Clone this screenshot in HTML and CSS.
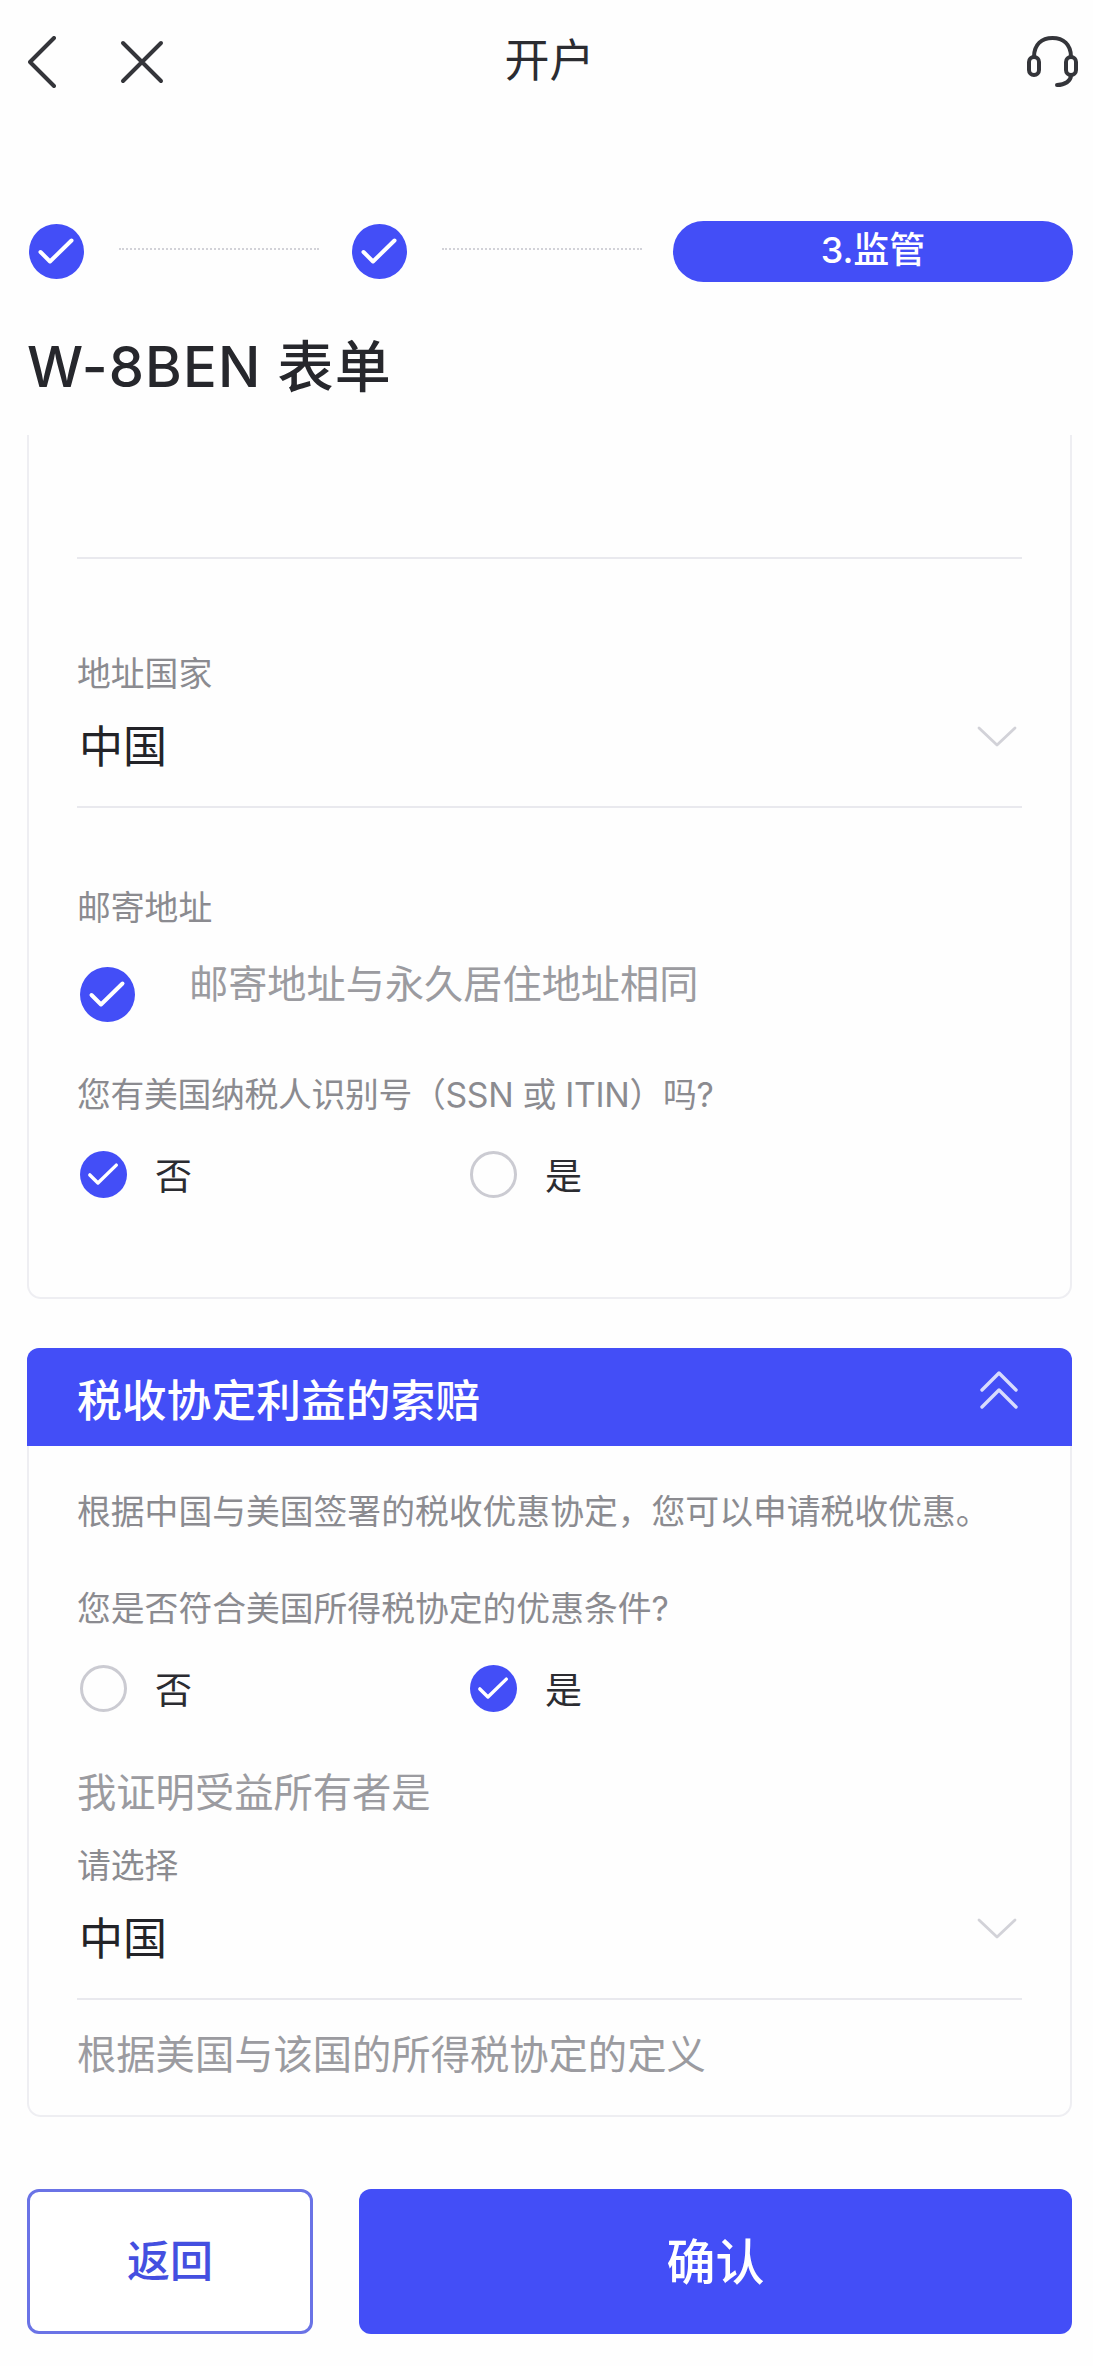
FILE: index.html
```html
<!DOCTYPE html>
<html lang="zh-CN">
<head>
  <meta charset="UTF-8">
  <meta name="viewport" content="width=device-width, initial-scale=1.0">
  <title>开户</title>
  <link rel="stylesheet" href="styles.css">
</head>
<body>
  <svg class="defs" aria-hidden="true">
    <symbol id="tick" viewBox="0 0 55 55">
      <circle cx="27.5" cy="27.5" r="27.5" fill="#434ef7" />
      <path d="M11.500 28 L21 37.500 L42.500 16.500" fill="none" stroke="#fff" stroke-width="4" stroke-linecap="round" stroke-linejoin="round" />
    </symbol>
    <symbol id="chevron" viewBox="0 0 40 21">
      <path d="M2 2 L20 19 L38 2" fill="none" stroke="#d2d2d8" stroke-width="2.8" stroke-linecap="round" stroke-linejoin="round" />
    </symbol>
  </svg>

  <div class="topbar">
    <div class="topbar-left">
      <svg class="icon-back" viewBox="0 0 28 52"><path d="M26 2 L2 26 L26 50" /></svg>
      <svg class="icon-close" viewBox="0 0 44 44"><path d="M3 3 L41 41 M41 3 L3 41" /></svg>
    </div>
    <div class="topbar-title">开户</div>
    <div class="topbar-right">
      <svg class="icon-headset" viewBox="0 0 52 52">
        <rect x="3" y="21" width="10" height="18" rx="5" />
        <rect x="40" y="21" width="10" height="18" rx="5" />
        <path d="M8 21 C8 8 16 2 26.500 2 C37 2 45 8 45 21 M45 39 C45 45 39 49 31 49" />
      </svg>
    </div>
  </div>

  <div class="steps">
    <svg class="step-done"><use href="#tick" /></svg>
    <div class="step-line"></div>
    <svg class="step-done"><use href="#tick" /></svg>
    <div class="step-line"></div>
    <div class="step-current">3.监管</div>
  </div>

  <h1 class="page-title">W-8BEN 表单</h1>

  <div class="card-body card-first">
    <div class="empty-field"></div>

    <div class="field field-country">
      <div class="label">地址国家</div>
      <div class="select-row">
        <span class="select-value">中国</span>
        <svg class="select-arrow"><use href="#chevron" /></svg>
      </div>
    </div>

    <div class="label mail-label">邮寄地址</div>
    <div class="same-address">
      <svg class="same-tick"><use href="#tick" /></svg>
      <span class="same-text">邮寄地址与永久居住地址相同</span>
    </div>

    <div class="label question">您有美国纳税人识别号（SSN 或 ITIN）吗?</div>
    <div class="radios radios-tight">
      <div class="radio">
        <svg class="radio-on"><use href="#tick" /></svg>
        <span>否</span>
      </div>
      <div class="radio">
        <i class="radio-off"></i>
        <span>是</span>
      </div>
    </div>
  </div>

  <div class="card-head">
    <span>税收协定利益的索赔</span>
    <svg class="icon-collapse" viewBox="0 0 38 38">
      <path d="M2 19 L19 2 L36 19 M2 36 L19 19 L36 36" />
    </svg>
  </div>
  <div class="card-body card-second">
    <div class="label intro">根据中国与美国签署的税收优惠协定，您可以申请税收优惠。</div>
    <div class="label question-two">您是否符合美国所得税协定的优惠条件?</div>
    <div class="radios radios-tight">
      <div class="radio">
        <i class="radio-off"></i>
        <span>否</span>
      </div>
      <div class="radio">
        <svg class="radio-on"><use href="#tick" /></svg>
        <span>是</span>
      </div>
    </div>
    <div class="hint owner">我证明受益所有者是</div>
    <div class="field field-owner">
      <div class="label">请选择</div>
      <div class="select-row">
        <span class="select-value">中国</span>
        <svg class="select-arrow"><use href="#chevron" /></svg>
      </div>
    </div>
    <div class="hint definition">根据美国与该国的所得税协定的定义</div>
  </div>

  <div class="actions">
    <button class="btn-back">返回</button>
    <button class="btn-confirm">确认</button>
  </div>
</body>
</html>
```

FILE: styles.css
```css
* {
  box-sizing: border-box;
}
body {
  margin: 0;
  width: 1093px;
  height: 2366px;
  overflow: hidden;
  background: #fefefe;
  color: #222328;
  font-family: Inter, "Noto Sans CJK SC", sans-serif;
}
.defs {
  display: none;
}

/* top bar */
.topbar {
  height: 124px;
  padding: 0 15px;
  display: grid;
  grid-template-columns: 1fr auto 1fr;
  align-items: center;
}
.topbar svg {
  display: block;
  fill: none;
  stroke: #34353a;
  stroke-width: 4;
  stroke-linecap: round;
  stroke-linejoin: round;
}
.topbar-left {
  padding-left: 13px;
  display: flex;
  align-items: center;
  gap: 64px;
}
.icon-back {
  width: 28px;
  height: 52px;
}
.icon-close {
  width: 44px;
  height: 44px;
}
.topbar-title {
  margin: 0 0 3px 6px;
  font-size: 45px;
  line-height: 60px;
  color: #2b2c31;
}
.topbar-right {
  display: flex;
  justify-content: flex-end;
}
.icon-headset {
  width: 52px;
  height: 52px;
}

/* steps */
.steps {
  margin-top: 97px;
  height: 61px;
  padding: 0 20px 0 29px;
  display: flex;
  align-items: center;
}
.step-done {
  width: 55px;
  height: 55px;
  flex: none;
}
.step-line {
  width: 200px;
  margin: 0 33px 6px 35px;
  border-top: 2px dotted #d2d2d8;
}
.step-current {
  flex: 1;
  margin-left: -2px;
  height: 61px;
  border-radius: 31px;
  background: #434ef7;
  color: #fff;
  font-size: 36px;
  font-weight: 500;
  line-height: 58px;
  text-align: center;
}

/* heading */
.page-title {
  margin: 47px 0 0 27px;
  font-size: 56px;
  letter-spacing: 1.15px;
  line-height: 76px;
  font-weight: 500;
  color: #26272c;
}

/* cards */
.card-body {
  width: 1045px;
  margin-left: 27px;
  padding: 0 48px;
  border: 2px solid #eeeef2;
  border-top: none;
  border-radius: 0 0 14px 14px;
}
.card-first {
  margin-top: 30px;
  padding-bottom: 93px;
}
.empty-field {
  height: 124px;
  border-bottom: 2px solid #e9e9ee;
}
.label {
  font-size: 33.8px;
  line-height: 40px;
  color: #8b8b90;
}
.field-country {
  margin-top: 95px;
}
.select-row {
  padding: 23px 0 29px 2px;
  display: flex;
  justify-content: space-between;
  align-items: flex-start;
  border-bottom: 2px solid #e9e9ee;
}
.select-value {
  font-size: 44px;
  line-height: 60px;
  color: #222328;
}
.select-arrow {
  width: 40px;
  height: 21px;
  margin: 9px 5px 0 0;
}
.mail-label {
  margin-top: 80px;
}
.same-address {
  margin-top: 31px;
  padding-left: 3px;
  display: flex;
  align-items: flex-start;
}
.same-tick {
  width: 55px;
  height: 55px;
  margin-top: 8px;
  flex: none;
}
.same-text {
  margin-left: 54px;
  font-size: 39.2px;
  line-height: 50px;
  color: #9b9ba0;
}
.question {
  margin-top: 53px;
  letter-spacing: -0.3px;
}
.radios {
  margin-top: 30px;
  padding-left: 3px;
  height: 60px;
  display: grid;
  grid-template-columns: 390px 1fr;
}
.radios-tight {
  margin-top: 29px;
}
.radio {
  display: flex;
  align-items: center;
  gap: 28px;
  font-size: 37px;
  color: #2b2c31;
}
.radio-on,
.radio-off {
  display: block;
  width: 47px;
  height: 47px;
  flex: none;
}
.radio-off {
  border: 3px solid #cbcbd2;
  border-radius: 50%;
}
.card-head {
  width: 1045px;
  height: 98px;
  margin: 49px 0 0 27px;
  padding: 0 54px 0 50px;
  display: flex;
  justify-content: space-between;
  align-items: center;
  background: #434ef7;
  border-radius: 12px 12px 0 0;
  color: #fff;
  font-size: 44.8px;
  font-weight: 500;
}
.icon-collapse {
  width: 38px;
  height: 38px;
  margin-bottom: 15px;
  fill: none;
  stroke: #d8dbfd;
  stroke-width: 3.4;
  stroke-linecap: round;
  stroke-linejoin: round;
}
.card-second {
  padding-bottom: 35px;
}
.intro {
  padding-top: 46px;
}
.question-two {
  margin-top: 57px;
}
.hint {
  font-size: 39.3px;
  line-height: 50px;
  color: #9b9ba0;
}
.owner {
  margin-top: 50px;
}
.field-owner {
  margin-top: 28px;
}
.definition {
  margin-top: 30px;
}

/* bottom buttons */
.actions {
  margin: 72px 21px 0 27px;
  height: 145px;
  display: flex;
  gap: 46px;
}
.actions button {
  border-radius: 12px;
  font-family: inherit;
  font-weight: 500;
  padding: 0 0 7px;
}
.btn-back {
  width: 286px;
  background: #fff;
  border: 3px solid #6a73e6;
  color: #444fe0;
  font-size: 43px;
}
.btn-confirm {
  flex: 1;
  background: #434ef7;
  border: none;
  color: #fff;
  font-size: 49px;
}
```
